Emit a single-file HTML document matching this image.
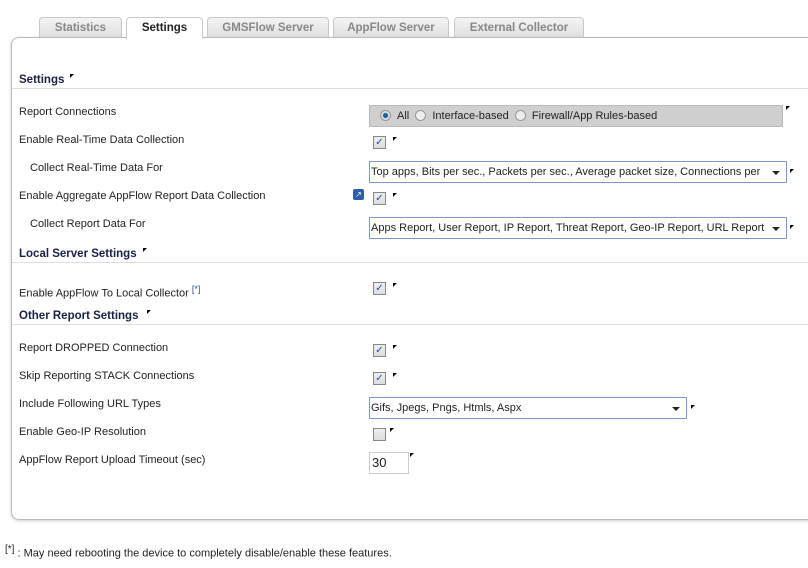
<!DOCTYPE html>
<html><head><meta charset="utf-8"><style>
*{margin:0;padding:0;box-sizing:border-box}
body{width:808px;height:568px;background:#fff;font-family:"Liberation Sans",sans-serif;font-size:11px;color:#222;position:relative;overflow:hidden}
.a{position:absolute;white-space:nowrap}
.tab{position:absolute;top:17px;height:21px;border:1px solid #c8c8c8;border-bottom:none;border-radius:4px 4px 0 0;background:linear-gradient(#f4f4f4,#dedede);color:#888;font-weight:bold;font-size:11.5px;text-align:center;line-height:20px}
.tab.on{background:#fff;color:#222;height:22px;z-index:2}
.panel{position:absolute;left:11px;top:37px;width:820px;height:483px;border:1px solid #bbb;border-radius:8px;box-shadow:0 1px 3px #ccc}
.h{position:absolute;left:19px;font-weight:bold;color:#1a2045;font-size:11.5px}
.line{position:absolute;left:12px;width:800px;height:1px;background:#ddd}
.lbl{position:absolute;white-space:nowrap}
.cb{position:absolute;width:13px;height:13px;border:1px solid #888;background:linear-gradient(#eee,#ddd);color:#2850a0;font-size:10px;line-height:11px;text-align:center}
.tri{position:absolute;width:0;height:0;border-top:4px solid #000;border-right:4px solid transparent}
.sel{position:absolute;left:369px;height:22px;border:1px solid #7a9cc8;background:#fff;padding-left:1px;line-height:20px;font-size:11px;white-space:nowrap;overflow:hidden}
.sel:after{content:"";position:absolute;right:6px;top:9px;border-top:4px solid #222;border-left:4px solid transparent;border-right:4px solid transparent}
.rad{display:inline-block;width:11px;height:11px;border-radius:50%;border:1px solid #999;background:#eee;vertical-align:-2px;margin:0 6px 0 0}
</style></head><body>
<div class="tab" style="left:39px;width:83px">Statistics</div>
<div class="tab on" style="left:126px;width:77px">Settings</div>
<div class="tab" style="left:207px;width:122px">GMSFlow Server</div>
<div class="tab" style="left:333px;width:116px">AppFlow Server</div>
<div class="tab" style="left:454px;width:130px">External Collector</div>
<div class="panel"></div>

<div class="h" style="top:74px">Settings</div><div class="tri" style="left:70px;top:74px"></div>
<div class="line" style="top:88px"></div>
<div class="lbl" style="left:19px;top:106px">Report Connections</div>
<div class="a" style="left:369px;top:105px;width:414px;height:22px;background:#cfcfcf;border:1px solid #bbb;line-height:20px;padding-left:10px">
<span class="rad" style="background:radial-gradient(#1d5fa0 35%,#ddd 45%)"></span>All&nbsp;&nbsp;<span class="rad"></span>Interface-based&nbsp;&nbsp;<span class="rad"></span>Firewall/App Rules-based</div>
<div class="tri" style="left:786px;top:106px"></div>

<div class="lbl" style="left:19px;top:134px">Enable Real-Time Data Collection</div>
<div class="cb" style="left:373px;top:136px">✓</div><div class="tri" style="left:393px;top:137px"></div>
<div class="lbl" style="left:30px;top:162px">Collect Real-Time Data For</div>
<div class="sel" style="top:161px;width:418px">Top apps, Bits per sec., Packets per sec., Average packet size, Connections per</div><div class="tri" style="left:790px;top:169px"></div>
<div class="lbl" style="left:19px;top:190px">Enable Aggregate AppFlow Report Data Collection</div>
<div class="a" style="left:353px;top:189px;width:11px;height:11px;background:#2d5fae;border-radius:2px;color:#fff;font-size:8px;line-height:11px;text-align:center">↗</div>
<div class="cb" style="left:373px;top:192px">✓</div><div class="tri" style="left:393px;top:193px"></div>
<div class="lbl" style="left:30px;top:218px">Collect Report Data For</div>
<div class="sel" style="top:217px;width:418px">Apps Report, User Report, IP Report, Threat Report, Geo-IP Report, URL Report</div><div class="tri" style="left:790px;top:225px"></div>

<div class="h" style="top:248px">Local Server Settings</div><div class="tri" style="left:143px;top:248px"></div>
<div class="line" style="top:262px"></div>
<div class="lbl" style="left:19px;top:284px">Enable AppFlow To Local Collector <sup style="color:#2850a0;font-size:9px">[*]</sup></div>
<div class="cb" style="left:373px;top:282px">✓</div><div class="tri" style="left:393px;top:283px"></div>

<div class="h" style="top:310px">Other Report Settings</div><div class="tri" style="left:147px;top:310px"></div>
<div class="line" style="top:324px"></div>
<div class="lbl" style="left:19px;top:342px">Report DROPPED Connection</div>
<div class="cb" style="left:373px;top:344px">✓</div><div class="tri" style="left:393px;top:345px"></div>
<div class="lbl" style="left:19px;top:370px">Skip Reporting STACK Connections</div>
<div class="cb" style="left:373px;top:372px">✓</div><div class="tri" style="left:393px;top:373px"></div>
<div class="lbl" style="left:19px;top:398px">Include Following URL Types</div>
<div class="sel" style="top:397px;width:318px">Gifs, Jpegs, Pngs, Htmls, Aspx</div><div class="tri" style="left:691px;top:405px"></div>
<div class="lbl" style="left:19px;top:426px">Enable Geo-IP Resolution</div>
<div class="cb" style="left:373px;top:428px"></div><div class="tri" style="left:390px;top:428px"></div>
<div class="lbl" style="left:19px;top:454px">AppFlow Report Upload Timeout (sec)</div>
<div class="a" style="left:369px;top:452px;width:40px;height:22px;border:1px solid #ccc;font-size:13px;line-height:20px;padding-left:2px">30</div><div class="tri" style="left:410px;top:453px"></div>

<div class="lbl" style="left:5px;top:544px"><sup style="font-size:10px">[*]</sup> : May need rebooting the device to completely disable/enable these features.</div>
</body></html>
